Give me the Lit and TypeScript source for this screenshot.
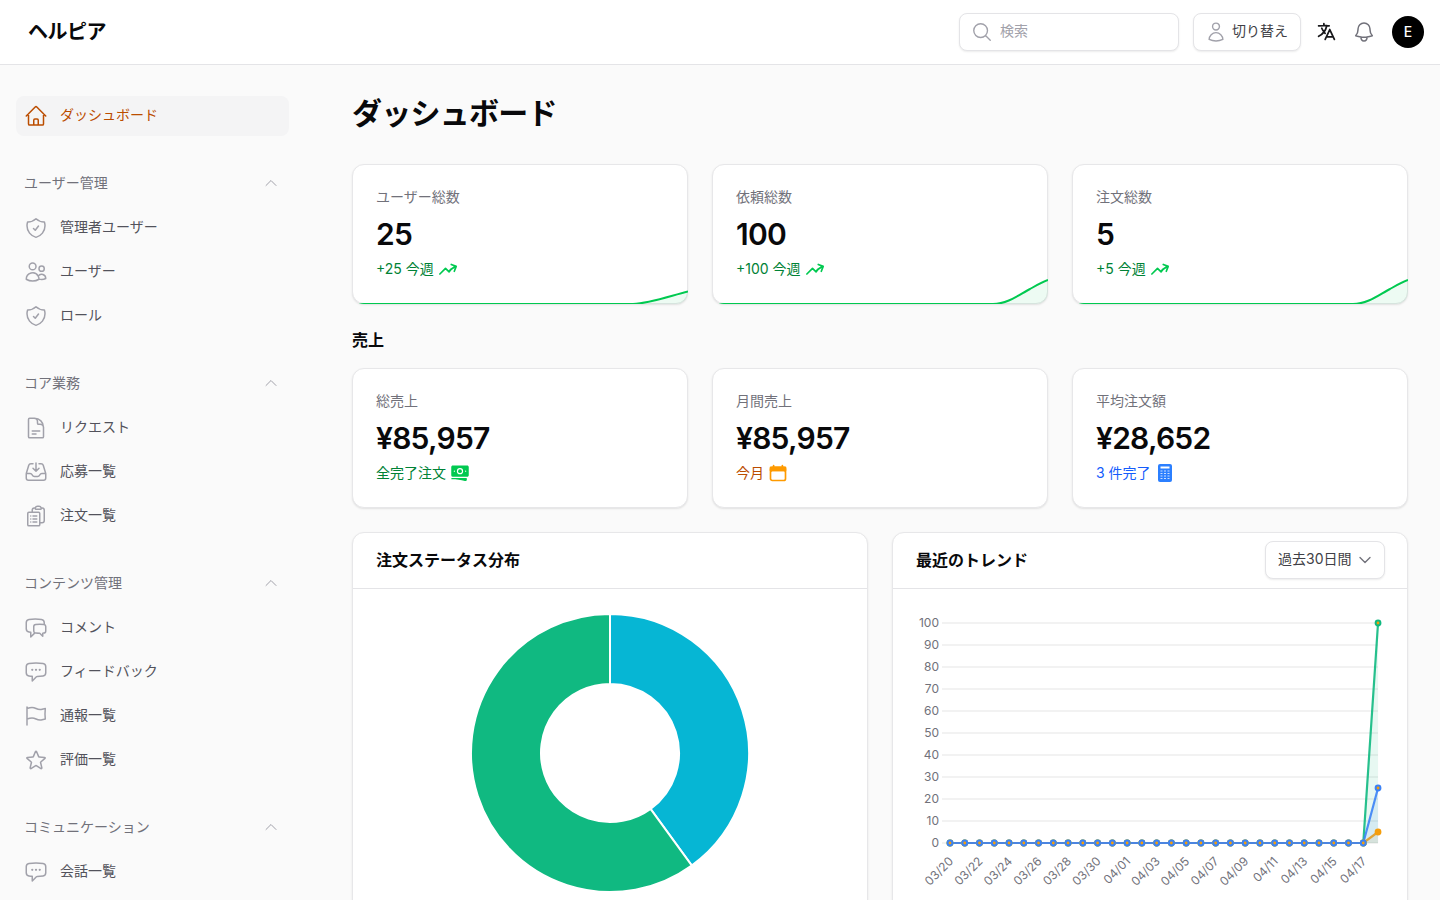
import { LitElement, html, css, svg } from 'lit';
import { customElement } from 'lit/decorators.js';
import { classMap } from 'lit/directives/class-map.js';

const P = {
  home: 'm2.25 12 8.954-8.955c.44-.439 1.152-.439 1.591 0L21.75 12M4.5 9.75v10.125c0 .621.504 1.125 1.125 1.125H9.75v-4.875c0-.621.504-1.125 1.125-1.125h2.25c.621 0 1.125.504 1.125 1.125V21h4.125c.621 0 1.125-.504 1.125-1.125V9.75M8.25 21h8.25',
  shield: 'M9.5 12.5 11.25 14.25 14.5 10m-2.5-7.286A11.959 11.959 0 0 1 3.598 6 11.99 11.99 0 0 0 3 9.749c0 5.592 3.824 10.29 9 11.623 5.176-1.332 9-6.03 9-11.622 0-1.31-.21-2.571-.598-3.751h-.152c-3.196 0-6.1-1.248-8.25-3.285Z',
  users: 'M15 19.128a9.38 9.38 0 0 0 2.625.372 9.337 9.337 0 0 0 4.121-.952 4.125 4.125 0 0 0-7.533-2.493M15 19.128v-.003c0-1.113-.285-2.16-.786-3.07M15 19.128v.106A12.318 12.318 0 0 1 8.624 21c-2.331 0-4.512-.645-6.374-1.766l-.001-.109a6.375 6.375 0 0 1 11.964-3.07M12 6.375a3.375 3.375 0 1 1-6.75 0 3.375 3.375 0 0 1 6.75 0Zm8.25 2.25a2.625 2.625 0 1 1-5.25 0 2.625 2.625 0 0 1 5.25 0Z',
  doc: 'M19.5 14.25v-2.625a3.375 3.375 0 0 0-3.375-3.375h-1.5A1.125 1.125 0 0 1 13.5 7.125v-1.5a3.375 3.375 0 0 0-3.375-3.375H8.25m0 12.75h7.5m-7.5 3H12M10.5 2.25H5.625c-.621 0-1.125.504-1.125 1.125v17.25c0 .621.504 1.125 1.125 1.125h12.75c.621 0 1.125-.504 1.125-1.125V11.25a9 9 0 0 0-9-9Z',
  inbox: 'M9 3.75H6.912a2.25 2.25 0 0 0-2.15 1.588L2.35 13.177a2.25 2.25 0 0 0-.1.661V18a2.25 2.25 0 0 0 2.25 2.25h15A2.25 2.25 0 0 0 21.75 18v-4.162c0-.224-.034-.447-.1-.661L19.24 5.338a2.25 2.25 0 0 0-2.15-1.588H15M2.25 13.5h3.86a2.25 2.25 0 0 1 2.012 1.244l.256.512a2.25 2.25 0 0 0 2.013 1.244h3.218a2.25 2.25 0 0 0 2.013-1.244l.256-.512a2.25 2.25 0 0 1 2.013-1.244h3.859M12 3v8.25m0 0-3-3m3 3 3-3',
  clip: 'M9 12h3.75M9 15h3.75M9 18h3.75m3 .75H18a2.25 2.25 0 0 0 2.25-2.25V6.108c0-1.135-.845-2.098-1.976-2.192a48.424 48.424 0 0 0-1.123-.08m-5.801 0c-.065.21-.1.433-.1.664 0 .414.336.75.75.75h4.5a.75.75 0 0 0 .75-.75 2.25 2.25 0 0 0-.1-.664m-5.8 0A2.251 2.251 0 0 1 13.5 2.25H15c1.012 0 1.867.668 2.15 1.586m-5.8 0c-.376.023-.75.05-1.124.08C9.095 4.01 8.25 4.973 8.25 6.108V8.25m0 0H4.875c-.621 0-1.125.504-1.125 1.125v11.25c0 .621.504 1.125 1.125 1.125h9.75c.621 0 1.125-.504 1.125-1.125V9.375c0-.621-.504-1.125-1.125-1.125H8.25ZM6.75 12h.008v.008H6.75V12Zm0 3h.008v.008H6.75V15Zm0 3h.008v.008H6.75V18Z',
  chats: 'M20.25 8.511c.884.284 1.5 1.128 1.5 2.097v4.286c0 1.136-.847 2.1-1.98 2.193-.34.027-.68.052-1.02.072v3.091l-3-3c-1.354 0-2.694-.055-4.02-.163a2.115 2.115 0 0 1-.825-.242m9.345-8.334a2.126 2.126 0 0 0-.476-.095 48.64 48.64 0 0 0-8.048 0c-1.131.094-1.976 1.057-1.976 2.192v4.286c0 .837.46 1.58 1.155 1.951m9.345-8.334V6.637c0-1.621-1.152-3.026-2.76-3.235A48.455 48.455 0 0 0 11.25 3c-2.115 0-4.198.137-6.24.402-1.608.209-2.76 1.614-2.76 3.235v6.226c0 1.621 1.152 3.026 2.76 3.235.577.075 1.157.14 1.74.194V21l4.155-4.155',
  chat: 'M8.625 9.75a.375.375 0 1 1-.75 0 .375.375 0 0 1 .75 0Zm0 0H8.25m4.125 0a.375.375 0 1 1-.75 0 .375.375 0 0 1 .75 0Zm0 0H12m4.125 0a.375.375 0 1 1-.75 0 .375.375 0 0 1 .75 0Zm0 0h-.375m-13.5 3.01c0 1.6 1.123 2.994 2.707 3.227 1.087.16 2.185.283 3.293.369V21l4.184-4.183a1.14 1.14 0 0 1 .778-.332 48.294 48.294 0 0 0 5.83-.498c1.585-.233 2.708-1.626 2.708-3.228V6.741c0-1.602-1.123-2.995-2.707-3.228A48.394 48.394 0 0 0 12 3c-2.392 0-4.744.175-7.043.513C3.373 3.746 2.25 5.14 2.25 6.741v6.018Z',
  flag: 'M3 3v1.5M3 21v-6m0 0 2.77-.693a9 9 0 0 1 6.208.682l.108.054a9 9 0 0 0 6.086.71l3.114-.732a48.524 48.524 0 0 1-.005-10.499l-3.11.732a9 9 0 0 1-6.085-.711l-.108-.054a9 9 0 0 0-6.208-.682L3 4.5M3 15V4.5',
  star: 'M11.48 3.499a.562.562 0 0 1 1.04 0l2.125 5.111a.563.563 0 0 0 .475.345l5.518.442c.499.04.701.663.321.988l-4.204 3.602a.563.563 0 0 0-.182.557l1.285 5.385a.562.562 0 0 1-.84.61l-4.725-2.885a.562.562 0 0 0-.586 0L6.982 20.54a.562.562 0 0 1-.84-.61l1.285-5.386a.562.562 0 0 0-.182-.557l-4.204-3.602a.562.562 0 0 1 .321-.988l5.518-.442a.563.563 0 0 0 .475-.345L11.48 3.5Z',
  user: 'M15.75 6a3.75 3.75 0 1 1-7.5 0 3.75 3.75 0 0 1 7.5 0ZM4.501 20.118a7.5 7.5 0 0 1 14.998 0A17.933 17.933 0 0 1 12 21.75c-2.676 0-5.216-.584-7.499-1.632Z',
  search: 'm21 21-5.197-5.197m0 0A7.5 7.5 0 1 0 5.196 5.196a7.5 7.5 0 0 0 10.607 10.607Z',
  bell: 'M14.857 17.082a23.848 23.848 0 0 0 5.454-1.31A8.967 8.967 0 0 1 18 9.75V9A6 6 0 0 0 6 9v.75a8.967 8.967 0 0 1-2.312 6.022c1.733.64 3.56 1.085 5.455 1.31m5.714 0a24.255 24.255 0 0 1-5.714 0m5.714 0a3 3 0 1 1-5.714 0',
  lang: 'm10.5 21 5.25-11.25L21 21m-9-3h7.5M3 5.621a48.474 48.474 0 0 1 6-.371m0 0c1.12 0 2.233.038 3.334.114M9 5.25V3m3.334 2.364C11.176 10.658 7.69 15.08 3 17.502m9.334-12.138c.896.061 1.785.147 2.666.257m-4.589 8.495a18.023 18.023 0 0 1-3.827-5.802',
  up: 'm4.5 15.75 7.5-7.5 7.5 7.5',
  down: 'm19.5 8.25-7.5 7.5-7.5-7.5',
  trend: 'M2.25 18 9 11.25l4.306 4.306a11.95 11.95 0 0 1 5.814-5.518l2.74-1.22m0 0-5.94-2.281m5.94 2.28-2.28 5.941',
  cal: 'M6.75 3v2.25M17.25 3v2.25M3 18.75V7.5a2.25 2.25 0 0 1 2.25-2.25h13.5A2.25 2.25 0 0 1 21 7.5v11.25m-18 0A2.25 2.25 0 0 0 5.25 21h13.5A2.25 2.25 0 0 0 21 18.75m-18 0v-7.5A2.25 2.25 0 0 1 5.25 9h13.5A2.25 2.25 0 0 1 21 11.25v7.5',
};

const BANKNOTE = 'M1.5 4.875C1.5 3.839 2.34 3 3.375 3h17.25c1.035 0 1.875.84 1.875 1.875v9.75c0 1.036-.84 1.875-1.875 1.875H3.375A1.875 1.875 0 0 1 1.5 14.625v-9.75ZM8.25 9.75a3.75 3.75 0 1 1 7.5 0 3.75 3.75 0 0 1-7.5 0ZM18.75 9a.75.75 0 0 0-.75.75v.008c0 .414.336.75.75.75h.008a.75.75 0 0 0 .75-.75V9.75a.75.75 0 0 0-.75-.75h-.008ZM4.5 9.75A.75.75 0 0 1 5.25 9h.008a.75.75 0 0 1 .75.75v.008a.75.75 0 0 1-.75.75H5.25a.75.75 0 0 1-.75-.75V9.75Z';

const icon = (d: string, size = 24, sw = 1.5) => html`
  <svg class="ic" width=${size} height=${size} viewBox="0 0 24 24" fill="none" stroke="currentColor"
    stroke-width=${sw} stroke-linecap="round" stroke-linejoin="round"><path d=${d}></path></svg>
`;

const groups = [
  { title: 'ユーザー管理', items: [['管理者ユーザー', P.shield], ['ユーザー', P.users], ['ロール', P.shield]] },
  { title: 'コア業務', items: [['リクエスト', P.doc], ['応募一覧', P.inbox], ['注文一覧', P.clip]] },
  { title: 'コンテンツ管理', items: [['コメント', P.chats], ['フィードバック', P.chat], ['通報一覧', P.flag], ['評価一覧', P.star]] },
  { title: 'コミュニケーション', items: [['会話一覧', P.chat]] },
];

const SPARK_LOW = { line: 'M3 60 L281 60 C298 59.5 318 52 336 47.5', area: 'M281 60 C298 59.5 318 52 336 47.5 L336 60 Z' };
const SPARK_HIGH = { line: 'M3 60 L281 60 C296 60 308 50 318 45 C325 41 330 38 336 36', area: 'M281 60 C296 60 308 50 318 45 C325 41 330 38 336 36 L336 60 Z' };

const totals = [
  { label: 'ユーザー総数', value: '25', trend: '+25 今週', spark: SPARK_LOW },
  { label: '依頼総数', value: '100', trend: '+100 今週', spark: SPARK_HIGH },
  { label: '注文総数', value: '5', trend: '+5 今週', spark: SPARK_HIGH },
];

// chart geometry, in px from the top left of the card body
const OX = 893;
const OY = 589;
const yOf = (v: number) => 843 - OY - v * 2.2;
const xOf = (i: number) => 950 - OX + i * 14.76;

const dates: string[] = [];
for (let i = 0; i < 30; i++) {
  const d = new Date(Date.UTC(2025, 2, 20 + i));
  dates.push(`${String(d.getUTCMonth() + 1).padStart(2, '0')}/${String(d.getUTCDate()).padStart(2, '0')}`);
}

const series = [
  { color: '#10b981', last: 100 },
  { color: '#f59e0b', last: 5 },
  { color: '#3b82f6', last: 25 },
];

const arc = (from: number, to: number, R: number, r: number, cx: number, cy: number) => {
  const pt = (a: number, rad: number) => {
    const t = (a * Math.PI) / 180;
    return `${(cx + rad * Math.sin(t)).toFixed(2)} ${(cy - rad * Math.cos(t)).toFixed(2)}`;
  };
  const large = to - from > 180 ? 1 : 0;
  return `M${pt(from, R)} A${R} ${R} 0 ${large} 1 ${pt(to, R)} L${pt(to, r)} A${r} ${r} 0 ${large} 0 ${pt(from, r)} Z`;
};

@customElement('app-root')
export class AppRoot extends LitElement {
  static styles = css`
    :host {
      display: block;
      height: 100vh;
      overflow: hidden;
      background: #fafafa;
      color: #09090b;
      font-family: Inter, 'Noto Sans CJK JP', sans-serif;
      font-size: 14px;
    }

    .ic {
      display: block;
      flex: none;
    }

    .txt {
      line-height: 20px;
      padding-bottom: 2px;
    }

    header {
      box-sizing: border-box;
      height: 65px;
      background: #fff;
      border-bottom: 1px solid #e4e4e7;
      display: flex;
      align-items: center;
      padding: 0 16px 1px 28px;
      gap: 14px;
    }

    .logo {
      font-size: 20px;
      font-weight: 600;
      letter-spacing: -0.025em;
      margin-right: auto;
      padding-bottom: 2px;
    }

    .search,
    .switch,
    .select {
      box-sizing: border-box;
      height: 38px;
      display: flex;
      align-items: center;
      background: #fff;
      border: 1px solid #e4e4e7;
      border-radius: 8px;
      box-shadow: 0 1px 2px rgba(0, 0, 0, 0.08);
    }

    .search {
      width: 220px;
      padding-left: 11px;
      gap: 7px;
      color: #a1a1aa;
    }

    .switch {
      width: 108px;
      padding-left: 11px;
      gap: 5px;
      color: #3f3f46;
    }

    .switch .ic {
      color: #a1a1aa;
    }

    .lang {
      width: 24px;
      height: 24px;
      display: flex;
      align-items: center;
      justify-content: center;
      color: #18181b;
      margin-left: -1px;
    }

    .bell {
      color: #71717a;
    }

    .avatar {
      width: 32px;
      height: 32px;
      margin-left: 2px;
      border-radius: 50%;
      background: #000;
      color: #fff;
      display: flex;
      align-items: center;
      justify-content: center;
      font-weight: 500;
    }

    .shell {
      display: flex;
      height: 835px;
      overflow: hidden;
    }

    aside {
      box-sizing: border-box;
      flex: 0 0 320px;
      padding: 31px 31px 0 16px;
    }

    .item {
      height: 40px;
      display: flex;
      align-items: center;
      gap: 12px;
      padding: 0 8px;
      border-radius: 8px;
      color: #52525b;
      margin-top: 4px;
    }

    .item .ic {
      color: #a1a1aa;
    }

    .item.active {
      margin-top: 0;
      background: #f4f4f5;
      color: #bb4d00;
    }

    .item.active .ic {
      color: #bb4d00;
    }

    .group {
      margin-top: 28px;
    }

    .group-title {
      box-sizing: border-box;
      height: 40px;
      display: flex;
      align-items: center;
      justify-content: space-between;
      padding: 0 10px 2px 8px;
      color: #71717a;
    }

    .group-title span {
      line-height: 20px;
    }

    .group-title .ic {
      color: #a1a1aa;
    }

    main {
      flex: 1;
      min-width: 0;
      padding: 30px 32px 0;
    }

    h1 {
      margin: 0 0 33px;
      font-size: 30px;
      line-height: 36px;
      font-weight: 600;
      letter-spacing: -0.025em;
    }

    h2 {
      margin: 24px 0 16px;
      font-size: 16px;
      line-height: 24px;
      font-weight: 600;
    }

    .stats {
      display: grid;
      grid-template-columns: repeat(3, 1fr);
      gap: 24px;
    }

    .card {
      position: relative;
      box-sizing: border-box;
      background: #fff;
      border: 1px solid #e7e7e9;
      border-radius: 12px;
      box-shadow: 0 1px 2px rgba(0, 0, 0, 0.1);
    }

    .stat {
      padding: 22px 23px 24px;
      display: flex;
      flex-direction: column;
      gap: 7px;
    }

    .stat-label {
      line-height: 20px;
      margin-bottom: 2px;
      color: #71717a;
    }

    .stat-value {
      font-size: 30px;
      line-height: 36px;
      font-weight: 600;
      letter-spacing: -0.025em;
    }

    .stat-sub {
      height: 20px;
      display: flex;
      align-items: center;
      gap: 4px;
      line-height: 20px;
    }

    .green {
      color: #008236;
    }

    .orange {
      color: #bb4d00;
    }

    .blue {
      color: #155dfc;
    }

    .green .ic {
      color: #00c950;
    }

    .orange .ic {
      color: #fe9a00;
    }

    .blue .ic {
      color: #2b7fff;
    }

    .spark {
      position: absolute;
      inset: -1px;
      border-radius: 12px;
      overflow: hidden;
      pointer-events: none;
    }

    .spark svg {
      position: absolute;
      left: 0;
      bottom: 0;
      display: block;
    }

    .charts {
      margin-top: 24px;
      display: grid;
      grid-template-columns: repeat(2, 1fr);
      gap: 24px;
    }

    .chart-head {
      box-sizing: border-box;
      height: 56px;
      padding: 0 22px 0 23px;
      border-bottom: 1px solid #e4e4e7;
      display: flex;
      align-items: center;
      justify-content: space-between;
      font-size: 16px;
      font-weight: 600;
    }

    .chart-title {
      line-height: 24px;
      padding-bottom: 2px;
    }

    .select {
      width: 120px;
      margin-bottom: 2px;
      padding: 0 11px 0 12px;
      justify-content: space-between;
      font-size: 14px;
      font-weight: 400;
      color: #3f3f46;
    }

    .select .ic {
      color: #71717a;
    }

    .chart-body {
      display: block;
      width: 100%;
      height: 328px;
    }

    .axis {
      font-family: Inter, sans-serif;
      font-size: 12px;
      fill: #71717a;
    }
  `;

  private renderStat(label: string, value: string, sub: unknown, spark?: { line: string; area: string }) {
    return html`
      <div class="card stat">
        <div class="stat-label">${label}</div>
        <div class="stat-value">${value}</div>
        ${sub}
        ${spark
          ? html`<div class="spark">
              <svg width="336" height="60" viewBox="0 0 336 60" fill="none">
                <path d=${spark.area} fill="#00c950" fill-opacity="0.07"></path>
                <path d=${spark.line} stroke="#00c950" stroke-width="2"></path>
              </svg>
            </div>`
          : ''}
      </div>
    `;
  }

  private renderDonut() {
    return html`
      <svg class="chart-body" viewBox="0 0 514 328">
        <path d=${arc(0, 144, 139, 69, 257, 164)} fill="#06b6d4" stroke="#fff" stroke-width="2"></path>
        <path d=${arc(144, 360, 139, 69, 257, 164)} fill="#10b981" stroke="#fff" stroke-width="2"></path>
      </svg>
    `;
  }

  private renderTrend() {
    const ticks = [0, 10, 20, 30, 40, 50, 60, 70, 80, 90, 100];
    const base = yOf(0);
    return html`
      <svg class="chart-body" viewBox="0 0 514 328">
        ${ticks.map(
          (t) => svg`
            <line x1=${942 - OX} x2=${1378 - OX} y1=${yOf(t)} y2=${yOf(t)} stroke="#e5e5e5"></line>
            <text class="axis" x=${939 - OX} y=${yOf(t) + 3.5} text-anchor="end">${t}</text>
          `
        )}
        ${dates.map((d, i) =>
          i % 2 === 0 && i < 29
            ? svg`<text class="axis" text-anchor="end" x=${xOf(i) + 4} y=${base + 19}
                transform="rotate(-45 ${xOf(i) + 4} ${base + 19})">${d}</text>`
            : ''
        )}
        ${series.map((s) => {
          const pts = dates.map((_, i) => `${xOf(i).toFixed(2)} ${(i === 29 ? yOf(s.last) : base).toFixed(2)}`);
          return svg`
            <path d="M${pts.join(' L')} L${xOf(29)} ${base} L${xOf(0)} ${base} Z" fill=${s.color} fill-opacity="0.1"></path>
            <path d="M${pts.join(' L')}" fill="none" stroke=${s.color} stroke-width="2.2" stroke-opacity="0.9"></path>
          `;
        })}
        ${series.map((s) =>
          dates.map(
            (_, i) => svg`<circle cx=${xOf(i)} cy=${i === 29 ? yOf(s.last) : base} r="2.4" fill="#f59e0b"
              stroke=${s.color} stroke-width="2"></circle>`
          )
        )}
      </svg>
    `;
  }

  render() {
    return html`
      <header>
        <div class="logo">ヘルピア</div>
        <div class="search">${icon(P.search, 22)}<span class="txt">検索</span></div>
        <div class="switch">${icon(P.user, 22)}<span class="txt">切り替え</span></div>
        <div class="lang">${icon(P.lang, 21, 2)}</div>
        <div class="bell">${icon(P.bell)}</div>
        <div class="avatar">E</div>
      </header>
      <div class="shell">
        <aside>
          <div class=${classMap({ item: true, active: true })}>${icon(P.home)}<span class="txt">ダッシュボード</span></div>
          ${groups.map(
            (g) => html`
              <div class="group">
                <div class="group-title"><span>${g.title}</span>${icon(P.up, 16)}</div>
                ${g.items.map(([name, d]) => html`<div class="item">${icon(d)}<span class="txt">${name}</span></div>`)}
              </div>
            `
          )}
        </aside>
        <main>
          <h1>ダッシュボード</h1>
          <div class="stats">
            ${totals.map((t) =>
              this.renderStat(
                t.label,
                t.value,
                html`<div class="stat-sub green"><span>${t.trend}</span>${icon(P.trend, 20, 2)}</div>`,
                t.spark
              )
            )}
          </div>
          <h2>売上</h2>
          <div class="stats">
            ${this.renderStat(
              '総売上',
              '¥85,957',
              html`<div class="stat-sub green">
                <span>全完了注文</span>
                <svg class="ic" width="20" height="20" viewBox="0 0 24 24" fill="currentColor">
                  <path fill-rule="evenodd" d=${BANKNOTE}></path>
                  <path d="M12 7.5a2.25 2.25 0 1 0 0 4.5 2.25 2.25 0 0 0 0-4.5Z"></path>
                  <path d="M2.25 18a.75.75 0 0 0 0 1.5c5.4 0 10.63.722 15.6 2.075 1.19.324 2.4-.558 2.4-1.82V18.75a.75.75 0 0 0-.75-.75H2.25Z"></path>
                </svg>
              </div>`
            )}
            ${this.renderStat(
              '月間売上',
              '¥85,957',
              html`<div class="stat-sub orange">
                <span>今月</span>
                <svg class="ic" width="20" height="20" viewBox="0 0 24 24" fill="none" stroke="currentColor" stroke-width="2" stroke-linecap="round" stroke-linejoin="round">
                  <rect x="3" y="5.25" width="18" height="3.75" fill="currentColor"></rect>
                  <path d=${P.cal}></path>
                </svg>
              </div>`
            )}
            ${this.renderStat(
              '平均注文額',
              '¥28,652',
              html`<div class="stat-sub blue">
                <span>3 件完了</span>
                <svg class="ic" width="20" height="20" viewBox="0 0 20 20">
                  <rect x="3" y="1" width="14" height="18" rx="2" fill="currentColor"></rect>
                  <rect x="5.5" y="3.5" width="9" height="2" fill="#fff"></rect>
                  <path d="M5.5 8h9M5.5 10.5h9M5.5 13h9M5.5 15.5h9" stroke="#fff" stroke-opacity="0.75" stroke-dasharray="2 1.5"></path>
                </svg>
              </div>`
            )}
          </div>
          <div class="charts">
            <div class="card">
              <div class="chart-head"><span class="chart-title">注文ステータス分布</span></div>
              ${this.renderDonut()}
            </div>
            <div class="card">
              <div class="chart-head">
                <span class="chart-title">最近のトレンド</span>
                <div class="select"><span class="txt">過去30日間</span>${icon(P.down, 16, 2)}</div>
              </div>
              ${this.renderTrend()}
            </div>
          </div>
        </main>
      </div>
    `;
  }
}
